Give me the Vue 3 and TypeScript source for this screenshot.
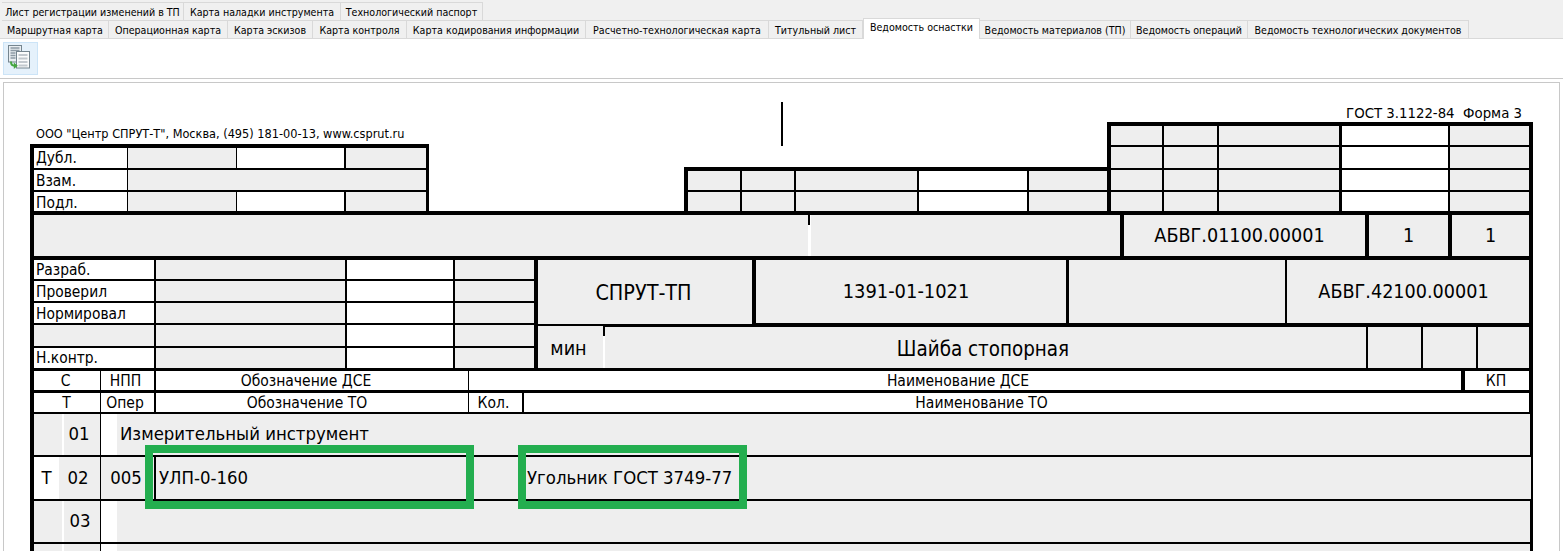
<script setup lang="ts">
import { h, type FunctionalComponent } from 'vue'

type Cell = {
  x0: number
  x1: number
  bg: 'w' | 'g' | 'tick'
  t?: string
  cls?: string
  pl?: number
  pr?: number
  mt?: number
  mb?: number
}
type Row = { y0: number; y1: number; cells: Cell[] }
type Block = { x0: number; x1: number; y0: number; y1: number; rows: Row[] }

const c = (x0: number, x1: number, bg: Cell['bg'] = 'g', t?: string, cls?: string, extra: Partial<Cell> = {}): Cell => ({ x0, x1, bg, t, cls, ...extra })

const FormBlock: FunctionalComponent<{ block: Block }> = ({ block }) => {
  let py = block.y0
  const rows = block.rows.map((row) => {
    let px = block.x0
    const cells = row.cells.map((cell) => {
      const style = {
        marginLeft: `${cell.x0 - px}px`,
        width: `${cell.x1 - cell.x0}px`,
        paddingLeft: cell.pl ? `${cell.pl}px` : undefined,
        paddingRight: cell.pr ? `${cell.pr}px` : undefined,
        marginTop: cell.mt ? `${cell.mt}px` : undefined,
        marginBottom: cell.mb ? `${cell.mb}px` : undefined,
      }
      px = cell.x1
      return h('div', { class: ['cell', `bg-${cell.bg}`, cell.cls, cell.pl !== undefined ? 'left' : ''], style }, cell.bg === 'tick' ? [h('i', { class: 'tick' })] : cell.t)
    })
    const style = { height: `${row.y1 - row.y0}px`, marginTop: `${row.y0 - py}px` }
    py = row.y1
    return h('div', { class: 'row', style }, cells)
  })
  return h('div', { class: 'block', style: { width: `${block.x1 - block.x0}px`, height: `${block.y1 - block.y0}px` } }, rows)
}

const tabsTop = [
  { label: 'Лист регистрации изменений в ТП', w: 182 },
  { label: 'Карта наладки инструмента', w: 157 },
  { label: 'Технологический паспорт', w: 142 },
]
const tabsBottom = [
  { label: 'Маршрутная карта', w: 107 },
  { label: 'Операционная карта', w: 119 },
  { label: 'Карта эскизов', w: 85 },
  { label: 'Карта контроля', w: 94 },
  { label: 'Карта кодирования информации', w: 179 },
  { label: 'Расчетно-технологическая карта', w: 183 },
  { label: 'Титульный лист', w: 94 },
  { label: 'Ведомость оснастки', w: 117, active: true },
  { label: 'Ведомость материалов (ТП)', w: 151 },
  { label: 'Ведомость операций', w: 117 },
  { label: 'Ведомость технологических документов', w: 221 },
]

const leftRow = (y0: number, y1: number, label: string, cls = 'lab'): Row => ({
  y0, y1, cells: [c(34, 127, 'w', label, cls, { pl: 2 }), c(128, 236), c(237, 344, 'w'), c(346, 426)],
})
const leftBlock: Block = {
  x0: 30, x1: 429, y0: 144, y1: 211,
  rows: [
    leftRow(148, 168, 'Дубл.'),
    { y0: 170, y1: 190, cells: [c(34, 127, 'w', 'Взам.', 'lab low', { pl: 2 }), c(128, 426)] },
    leftRow(192, 211, 'Подл.', 'lab low'),
  ],
}
const midCells = () => [c(688, 740), c(742, 794), c(796, 917), c(919, 1027, 'w'), c(1029, 1107)]
const midBlock: Block = {
  x0: 684, x1: 1107, y0: 167, y1: 211,
  rows: [{ y0: 171, y1: 190, cells: midCells() }, { y0: 192, y1: 211, cells: midCells() }],
}
const rightCells = () => [c(1111, 1162), c(1164, 1217), c(1219, 1339), c(1342, 1448, 'w'), c(1450, 1529)]
const rightBlock: Block = {
  x0: 1107, x1: 1533, y0: 122, y1: 211,
  rows: [
    { y0: 126, y1: 145, cells: rightCells() },
    { y0: 147, y1: 168, cells: rightCells() },
    { y0: 170, y1: 190, cells: rightCells() },
    { y0: 192, y1: 211, cells: rightCells() },
  ],
}
const bandBlock: Block = {
  x0: 30, x1: 1533, y0: 211, y1: 260,
  rows: [{
    y0: 215, y1: 256,
    cells: [
      c(34, 808), c(808, 811, 'tick'), c(811, 1120),
      c(1124, 1365, 'g', 'АБВГ.01100.00001', 'val', { pr: 10 }),
      c(1369, 1448, 'g', '1', 'val'),
      c(1452, 1529, 'g', '1', 'val'),
    ],
  }],
}
const signRow = (y0: number, y1: number, label?: string, cls = 'lab'): Row => ({
  y0, y1,
  cells: [
    c(34, 154, label ? 'w' : 'g', label, cls, { pl: 2 }),
    c(156, 345), c(347, 453, 'w'), c(455, 534),
  ],
})
const signBlock: Block = {
  x0: 30, x1: 538, y0: 260, y1: 371,
  rows: [
    signRow(260, 279, 'Разраб.'),
    signRow(281, 301, 'Проверил', 'lab low'),
    signRow(303, 323, 'Нормировал', 'lab low'),
    signRow(325, 346),
    signRow(348, 368, 'Н.контр.'),
  ],
}
const titleBlock: Block = {
  x0: 538, x1: 1533, y0: 260, y1: 371,
  rows: [
    {
      y0: 260, y1: 324,
      cells: [
        c(538, 752, 'g', 'СПРУТ-ТП', 'val wide', { pr: 3 }),
        c(756, 1066, 'g', '1391-01-1021', 'val mid', { mb: 1, pr: 10 }),
        c(1069, 1285, 'g', undefined, undefined, { mb: 1 }),
        c(1287, 1529, 'g', 'АБВГ.42100.00001', 'val', { mb: 1, pr: 9 }),
      ],
    },
    {
      y0: 326, y1: 368,
      cells: [
        c(538, 603, 'g', 'мин', 'val low', { pr: 4 }),
        c(603, 605, 'tick'),
        c(605, 1366, 'g', 'Шайба стопорная', 'val title low', { mt: 1, pr: 5 }),
        c(1368, 1421, 'g', undefined, undefined, { mt: 1 }),
        c(1423, 1476, 'g', undefined, undefined, { mt: 1 }),
        c(1478, 1529, 'g', undefined, undefined, { mt: 1 }),
      ],
    },
  ],
}
const emptyDataRow = (y0: number, y1: number, num?: string): Row => ({
  y0, y1,
  cells: [c(34, 62), c(62, 64, 'w'), c(64, 100, 'g', num, 'data', { pr: 4 }), c(101, 117, 'w'), c(117, 1530)],
})
const tableBlock: Block = {
  x0: 30, x1: 1533, y0: 371, y1: 600,
  rows: [
    {
      y0: 371, y1: 390,
      cells: [
        c(34, 100, 'w', 'С', 'head', { pr: 3 }),
        c(101, 154, 'w', 'НПП', 'head', { pr: 4 }),
        c(156, 468, 'w', 'Обозначение ДСЕ', 'head', { pr: 12 }),
        c(469, 1461, 'w', 'Наименование ДСЕ', 'head', { pr: 14 }),
        c(1465, 1529, 'w', 'КП', 'head', { pr: 2 }),
      ],
    },
    {
      y0: 393, y1: 412,
      cells: [
        c(34, 100, 'w', 'Т', 'head', { pr: 1 }),
        c(101, 154, 'w', 'Опер', 'head', { pr: 5 }),
        c(156, 468, 'w', 'Обозначение ТО', 'head', { pr: 10 }),
        c(469, 522, 'w', 'Кол.', 'head', { pr: 4 }),
        c(524, 1529, 'w', 'Наименование ТО', 'head', { pr: 90 }),
      ],
    },
    {
      y0: 414, y1: 455,
      cells: [
        c(34, 62), c(62, 64, 'w'), c(64, 100, 'g', '01', 'data', { pr: 6 }), c(101, 117, 'w'),
        c(117, 1530, 'g', 'Измерительный инструмент', 'data', { pl: 3 }),
      ],
    },
    {
      y0: 457, y1: 499,
      cells: [
        c(34, 59, 'w', 'Т', 'data'),
        c(59, 100, 'g', '02', 'data', { pr: 3 }),
        c(101, 154, 'g', '005', 'data', { pr: 3 }),
        c(156, 524, 'g', 'УЛП-0-160', 'data', { pl: 3 }),
        c(524, 1531, 'g', 'Угольник ГОСТ 3749-77', 'data', { pl: 3 }),
      ],
    },
    emptyDataRow(501, 542, '03'),
    emptyDataRow(544, 590),
  ],
}
</script>

<template>
  <div class="page">
    <nav class="tabs">
      <div class="tab-row">
        <div v-for="tab in tabsTop" :key="tab.label" class="tab" :style="{ width: tab.w + 'px' }">{{ tab.label }}</div>
      </div>
      <div class="tab-row tab-row-main">
        <div
          v-for="tab in tabsBottom"
          :key="tab.label"
          class="tab"
          :class="{ active: tab.active }"
          :style="{ width: tab.w + 'px' }"
        >{{ tab.label }}</div>
      </div>
    </nav>

    <div class="toolbar">
      <button class="tool" type="button" aria-label="Добавить лист">
        <svg width="22" height="24" viewBox="0 0 22 24">
          <rect x="0.5" y="0.5" width="13" height="16.5" fill="#e9eef2" stroke="#75858f" />
          <path d="M2.5 3h9M2.5 5.5h9M2.5 8h5M2.5 10.5h5M2.5 13h5" stroke="#8d9aa5" stroke-width="1.3" />
          <rect x="8.5" y="6.5" width="13" height="16.5" fill="#fbfcfd" stroke="#75858f" />
          <path d="M10.5 10h9M10.5 13.5h9M10.5 17h9M10.5 20.5h9" stroke="#c3c9cf" stroke-width="2" />
          <path d="M3 16.5c0 3 1 4.2 3.4 4.2" fill="none" stroke="#45a63f" stroke-width="2" />
          <path d="M5.8 17.4l4 3.3-4 3.3z" fill="#45a63f" />
        </svg>
      </button>
    </div>
    <div class="divider"></div>

    <main class="sheet">
      <div class="form">
        <div class="top">
          <div class="col-left">
            <div class="caption">ООО "Центр СПРУТ-Т", Москва, (495) 181-00-13, www.csprut.ru</div>
            <FormBlock :block="leftBlock" />
          </div>
          <div class="col-mid">
            <div class="mark"></div>
            <FormBlock :block="midBlock" />
          </div>
          <div class="col-right">
            <div class="gost">ГОСТ 3.1122-84&nbsp;&nbsp;Форма 3</div>
            <FormBlock :block="rightBlock" />
          </div>
        </div>
        <FormBlock :block="bandBlock" />
        <div class="section">
          <FormBlock :block="signBlock" />
          <FormBlock :block="titleBlock" />
        </div>
        <FormBlock :block="tableBlock" />
      </div>
      <div class="callout callout-a"></div>
      <div class="callout callout-b"></div>
    </main>
  </div>
</template>

<style scoped>
.page {
  width: 1563px;
  height: 551px;
  overflow: hidden;
  background: #fff;
  color: #000;
  font-family: "DejaVu Sans Condensed", "DejaVu Sans", sans-serif;
}
.tabs {
  height: 39px;
  box-sizing: border-box;
  padding-top: 2px;
  background: #f0f0f0;
}
.tab-row {
  display: flex;
  height: 18px;
  padding-left: 2px;
}
.tab-row-main {
  height: 19px;
  box-sizing: border-box;
  padding-left: 0;
  border-bottom: 1px solid #d9d9d9;
}
.tab-row-main .tab:first-child {
  margin-left: 2px;
}
.tab {
  flex: none;
  box-sizing: border-box;
  height: 18px;
  border: 1px solid #d9d9d9;
  border-width: 1px 1px 0 0;
  font-size: 10.6px;
  line-height: 18px;
  text-align: center;
  white-space: nowrap;
  color: #000;
}
.tab.active {
  height: 21px;
  margin-top: -2px;
  background: #fff;
  border-left: 1px solid #d9d9d9;
  line-height: 17px;
  position: relative;
}
.toolbar {
  height: 39px;
  box-sizing: border-box;
  padding: 3px 0 0 3px;
}
.tool {
  display: flex;
  align-items: flex-start;
  width: 35px;
  height: 33px;
  padding: 2px 0 0 4px;
  box-sizing: border-box;
  background: #e5f1fb;
  border: 1px solid #cce4f7;
}
.divider {
  height: 1px;
  background: #c8c8c8;
  margin-bottom: 3px;
}
.sheet {
  position: relative;
  width: 1557px;
  height: 500px;
  margin-left: 3px;
  box-sizing: border-box;
  border: 1px solid #c8c8c8;
  padding: 19px 0 0 26px;
  overflow: hidden;
}
.form {
  width: 1503px;
}
.top {
  display: flex;
  align-items: flex-end;
  height: 109px;
}
.col-left {
  width: 399px;
}
.caption {
  height: 18px;
  padding: 0 0 0 6px;
  font-size: 12.6px;
  line-height: 16px;
  white-space: nowrap;
  color: #000;
}
.col-mid {
  width: 423px;
  margin-left: 255px;
}
.mark {
  width: 2px;
  height: 44px;
  margin: 0 0 21px 97px;
  background: #000;
}
.col-right {
  width: 426px;
}
.gost {
  height: 20px;
  padding-right: 11px;
  text-align: right;
  font-size: 14.8px;
  line-height: 22px;
  white-space: nowrap;
  color: #000;
}
.section {
  display: flex;
}
.callout {
  position: absolute;
  top: 362px;
  height: 64px;
  box-sizing: border-box;
  border: 8px solid #23ae4f;
}
.callout-a {
  left: 141px;
  width: 329px;
}
.callout-b {
  left: 514px;
  width: 229px;
}
</style>

<style>
html, body {
  margin: 0;
  overflow: hidden;
  background: #fff;
}
.block {
  display: flow-root;
  background: #000;
  flex: none;
}
.block .row {
  display: flex;
}
.block .cell {
  flex: none;
  box-sizing: border-box;
  display: flex;
  align-items: center;
  justify-content: center;
  overflow: hidden;
  white-space: nowrap;
  color: #000;
}
.block .cell.left {
  justify-content: flex-start;
}
.block .bg-w { background: #fff; }
.block .bg-g { background: #eee; }
.block .bg-tick {
  flex-direction: column;
  justify-content: flex-start;
  align-items: flex-start;
  background: #fff;
}
.block .tick {
  display: block;
  width: 2px;
  height: 10px;
  background: #000;
}
.block .lab { font-size: 15.4px; }
.block .low { padding-top: 2px; }
.block .head { font-size: 15.5px; }
.block .val { font-size: 19.6px; }
.block .val.wide { font-size: 21.4px; }
.block .val.mid { font-size: 19.9px; }
.block .val.title { font-size: 20.4px; }
.block .data { font-size: 18.4px; padding-bottom: 2px; }
</style>
